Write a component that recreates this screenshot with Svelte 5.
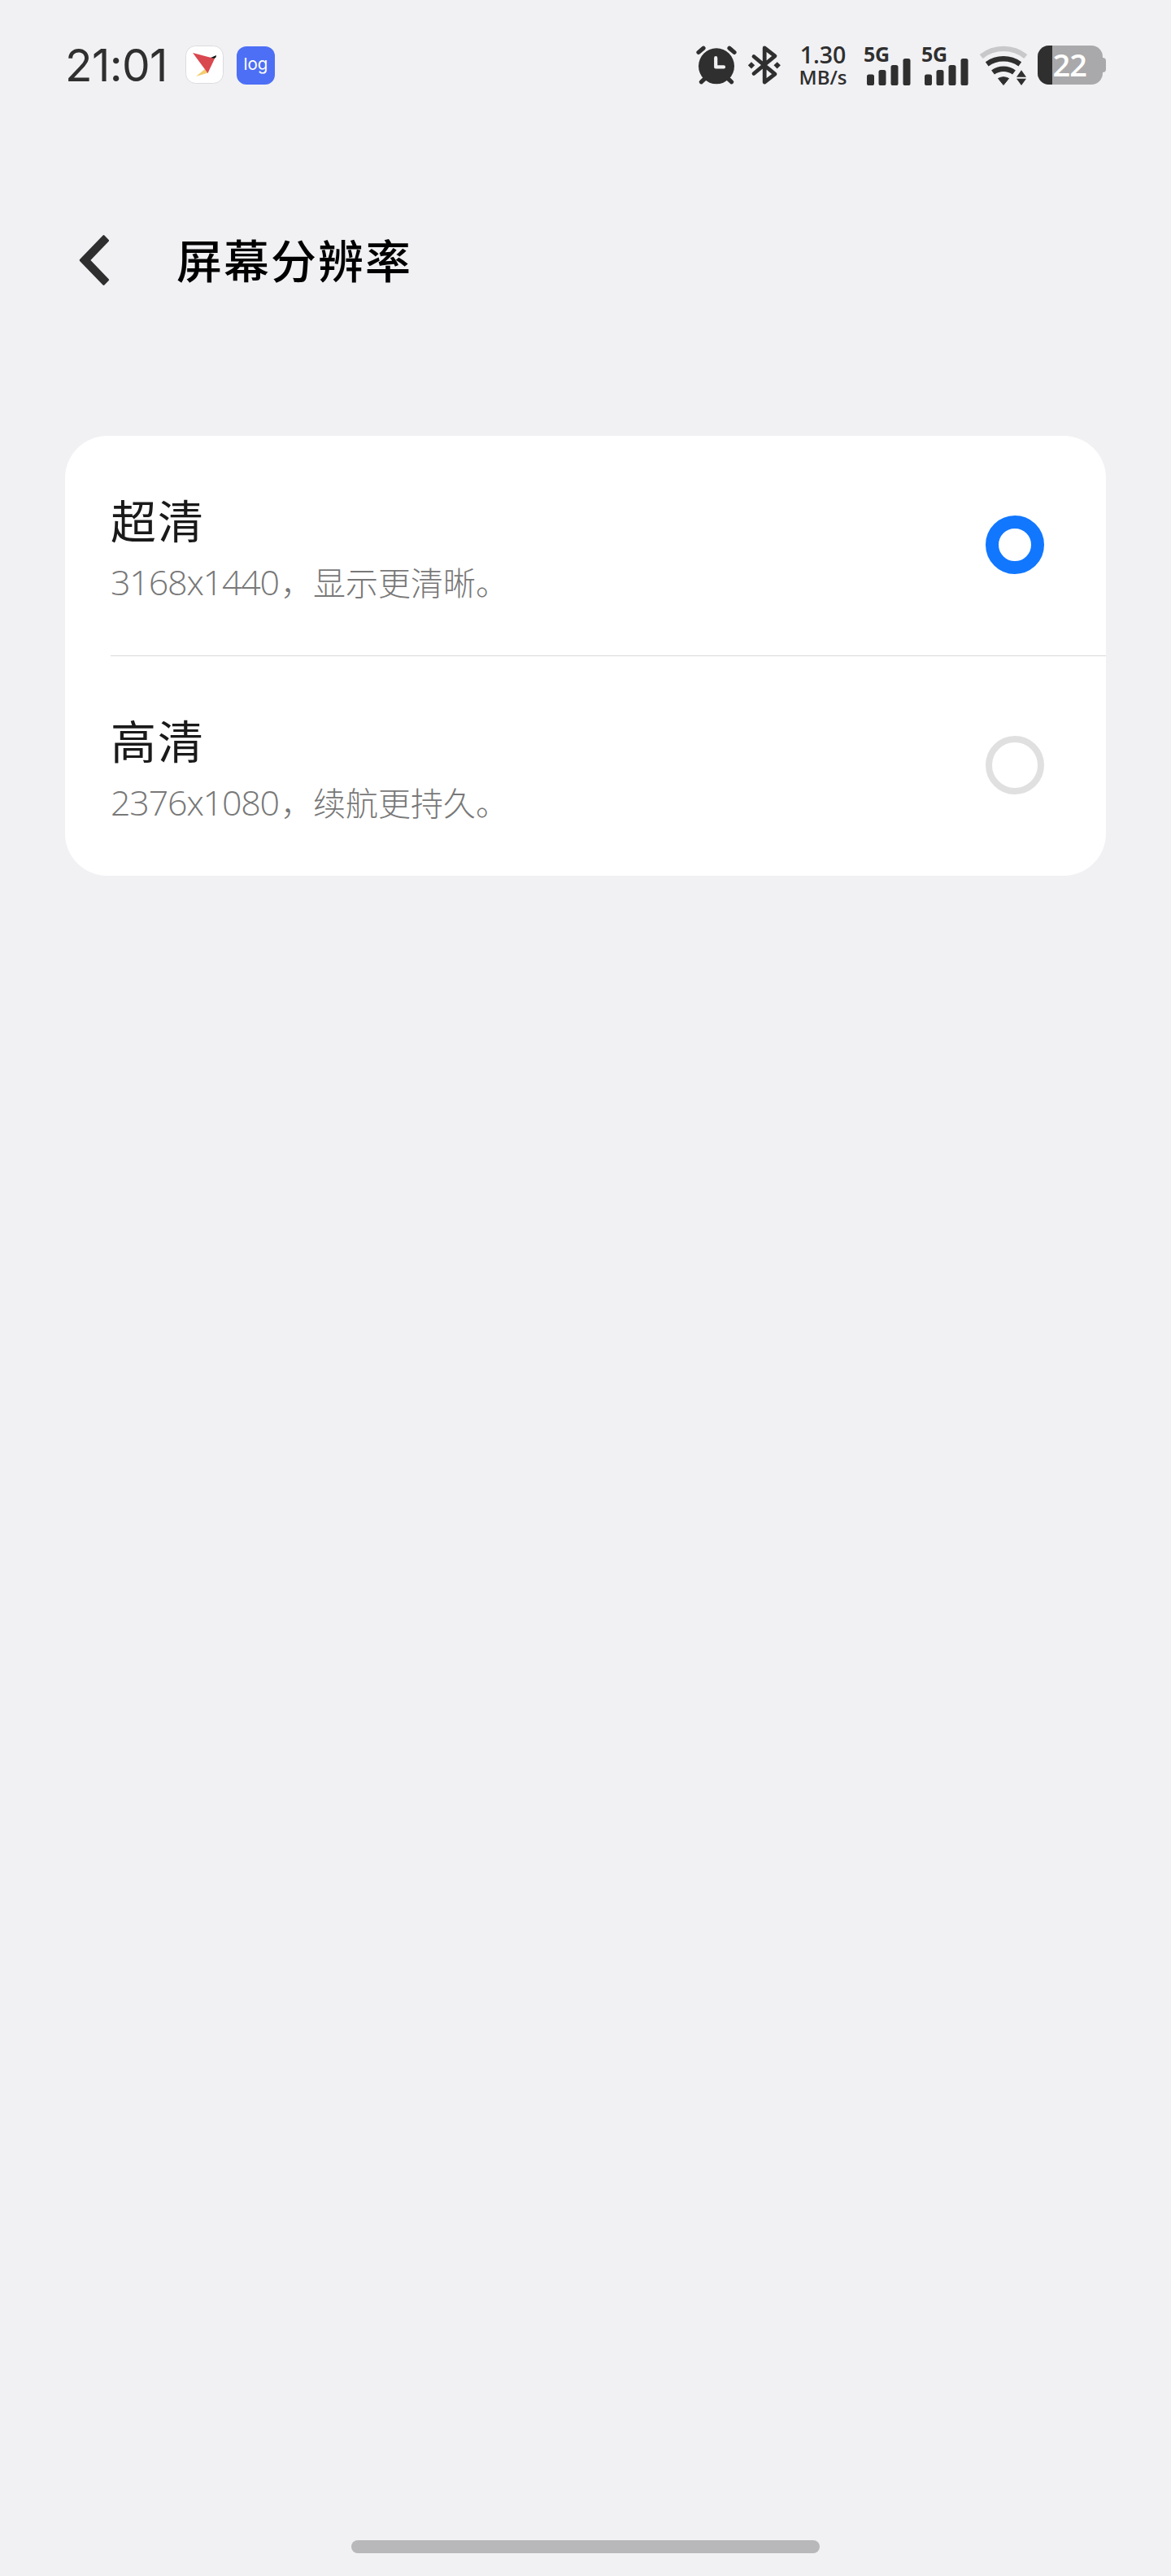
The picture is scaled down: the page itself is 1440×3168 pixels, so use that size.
<script>
    let options = [
        { id: 'uhd', title: '超清', size: '3168x1440', note: '显示更清晰。' },
        { id: 'hd', title: '高清', size: '2376x1080', note: '续航更持久。' }
    ];
    let selected = 'uhd';

    let sims = [1, 2];
    // x, top of each signal bar
    let bars = [[4, 37.5], [18.5, 32], [33.5, 26], [48.5, 18]];
    let battery = 22;
</script>

<div class="screen">
    <header class="status">
        <div class="left">
            <span class="clock">21:01</span>
            <svg class="app-icon" width="48" height="48" viewBox="0 0 48 48">
                <rect x="0.5" y="0.5" width="46" height="46" rx="12" fill="#fff" stroke="#dcdcdf" />
                <path d="M24 29 L28 33.5 L13 38 Z" fill="#f3cd70" />
                <path d="M9 9 L36 16 L27.5 34 Z" fill="#d9484f" />
                <path d="M31 15 L38 12 L37.5 14.5 L35.5 16 Z" fill="#111" />
            </svg>
            <span class="log-icon">log</span>
        </div>

        <div class="right">
            <svg class="alarm" width="54" height="52" viewBox="0 0 54 52">
                <circle cx="27" cy="27.3" r="22" fill="#2f2f2f" />
                <g stroke="#2f2f2f" stroke-width="5.2" stroke-linecap="round">
                    <path d="M5 10.4 L11 5.2 M49 10.4 L43 5.2" />
                    <path d="M8.3 46.8 L14 41.5 M45.7 46.8 L40 41.5" />
                </g>
                <path d="M26.2 17.2 V28.4 H36" fill="none" stroke="#f1f1f4" stroke-width="4.2" stroke-linecap="round" stroke-linejoin="round" />
            </svg>
            <svg class="bluetooth" width="44" height="52" viewBox="0 0 44 52">
                <path d="M9 15.5 L35 37.2 L22.2 47 V5 L35 14.8 L9 36.5" fill="none" stroke="#2f2f2f" stroke-width="4.8" stroke-linecap="round" stroke-linejoin="round" />
                <path d="M1.8 26.3 L6 22.2 L10.2 26.3 L6 30.4 Z M33.5 26.3 L37.7 22.2 L41.9 26.3 L37.7 30.4 Z" fill="#2f2f2f" />
            </svg>
            <div class="speed">
                <span class="num">1.30</span>
                <span class="unit">MB/s</span>
            </div>
            {#each sims as sim (sim)}
                <div class="signal">
                    <span class="net">5G</span>
                    <svg width="58" height="34" viewBox="0 18 58 34">
                        {#each bars as [x, top]}
                            <rect {x} y={top} width="9" height={51 - top} rx="2.6" fill="#2f2f2f" />
                        {/each}
                    </svg>
                </div>
            {/each}
            <svg class="wifi" width="60" height="52" viewBox="0 0 60 52">
                <g fill="none" stroke="#2f2f2f" stroke-width="6.4">
                    <path d="M2.7 15.4 A44 44 0 0 1 57.3 15.4" stroke="#c8c8ca" />
                    <path d="M9.7 24.8 A35 35 0 0 1 50.3 24.8" />
                    <path d="M17 35 A22 22 0 0 1 43 35" />
                </g>
                <path d="M23.5 42.5 Q30 39 36.5 42.5 L30 50.5 Z" fill="#2f2f2f" stroke="#2f2f2f" stroke-linejoin="round" />
                <path d="M46 40.7 L52 32.3 L58 40.7 Z M46 42.8 H58 L52 51 Z" fill="#2f2f2f" />
            </svg>
            <div class="battery">
                <div class="cell">
                    <div class="level" style="width: {battery}%"></div>
                    <span>{battery}</span>
                </div>
                <div class="nub"></div>
            </div>
        </div>
    </header>

    <nav class="title-bar">
        <svg width="40" height="64" viewBox="0 0 40 64">
            <path d="M2 32 L30.5 2.5 L35.8 7.8 L12.5 32 L35.8 56.2 L30.5 61.5 Z" fill="#2f2f2f" stroke="#2f2f2f" stroke-width="2.6" stroke-linejoin="round" />
        </svg>
        <h1>屏幕分辨率</h1>
    </nav>

    <main class="card">
        {#each options as option (option.id)}
            <label class="option">
                <div class="text">
                    <div class="name">{option.title}</div>
                    <div class="desc"><span class="digits">{option.size}</span>，{option.note}</div>
                </div>
                <input type="radio" name="resolution" value={option.id} bind:group={selected} />
            </label>
        {/each}
    </main>

    <div class="home-bar"></div>
</div>

<style>
    :global(body) {
        background: #f1f1f4;
    }

    .screen {
        width: 1440px;
        height: 3168px;
        box-sizing: border-box;
        padding: 54px 80px 28px;
        display: flex;
        flex-direction: column;
        background: #f1f1f4;
        font-family: "Noto Sans CJK SC", sans-serif;
    }

    .status {
        height: 52px;
        display: flex;
        justify-content: space-between;
        color: #2f2f2f;
    }

    .left,
    .right {
        display: flex;
        align-items: center;
    }

    .clock {
        width: 148px;
        font: 400 55px/52px Inter, sans-serif;
        letter-spacing: -0.6px;
        white-space: nowrap;
    }

    .log-icon {
        width: 47px;
        height: 47px;
        margin-left: 15px;
        border-radius: 12px;
        background: #4d6ff5;
        color: #fff;
        font: 400 20.5px/44px Inter, sans-serif;
        text-align: center;
    }

    .bluetooth {
        margin-left: 10px;
    }

    .speed {
        width: 58px;
        height: 52px;
        margin: 0 21px;
        display: flex;
        flex-direction: column;
        align-items: center;
        font-family: "Open Sans", sans-serif;
        font-weight: 600;
        white-space: nowrap;
    }

    .num {
        font-size: 28.5px;
        line-height: 27px;
    }

    .unit {
        font-size: 24px;
        line-height: 27px;
    }

    .signal {
        height: 52px;
        margin-right: 13px;
        display: flex;
        flex-direction: column;
    }

    .net {
        height: 18px;
        font: 700 25px/25px "Open Sans", sans-serif;
        letter-spacing: -0.3px;
    }

    .battery {
        display: flex;
        align-items: center;
        margin-left: 12px;
    }

    .cell {
        width: 80px;
        height: 48px;
        display: flex;
        border-radius: 14px;
        background: #a9a9ab;
    }

    .level {
        border-radius: 14px 0 0 14px;
        background: #2f2f2f;
    }

    .cell span {
        margin-left: 1px;
        color: #fff;
        font: 600 38px/47px "Open Sans", sans-serif;
        letter-spacing: -1px;
    }

    .nub {
        width: 4px;
        height: 18px;
        border-radius: 0 4px 4px 0;
        background: #a9a9ab;
    }

    .title-bar {
        height: 64px;
        margin-top: 182px;
        padding-left: 17px;
        display: flex;
        align-items: center;
    }

    h1 {
        margin: 0 0 5px 80px;
        font-size: 56px;
        font-weight: 500;
        line-height: 64px;
        letter-spacing: 2px;
        color: #000;
    }

    .card {
        margin-top: 184px;
        border-radius: 52px;
        background: #fff;
    }

    .option {
        height: 270px;
        margin-left: 56px;
        padding-right: 76px;
        display: flex;
        align-items: center;
        justify-content: space-between;
    }

    .option + .option {
        border-top: 1px solid #d9d9d9;
    }

    .text {
        padding-top: 12px;
    }

    .name {
        font-size: 56px;
        line-height: 76px;
        letter-spacing: 2px;
        color: #1a1a1a;
    }

    .desc {
        font-size: 40px;
        font-weight: 300;
        line-height: 78px;
        color: #787878;
        white-space: nowrap;
    }

    .digits {
        display: inline-block;
        width: 209px;
        font-family: "Open Sans", sans-serif;
        font-size: 43px;
        letter-spacing: -1.2px;
    }

    input {
        appearance: none;
        box-sizing: border-box;
        width: 72px;
        height: 72px;
        margin: 0 0 2px;
        border: 8px solid #e0e0e0;
        border-radius: 50%;
        background: #fff;
    }

    input:checked {
        border: 16px solid #1177ff;
    }

    .home-bar {
        width: 576px;
        height: 16px;
        margin: auto auto 0;
        border-radius: 8px;
        background: #b8b8ba;
    }
</style>
